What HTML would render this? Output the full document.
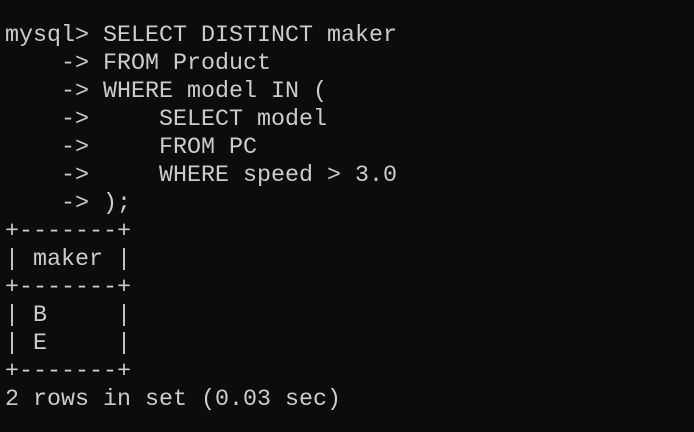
<!DOCTYPE html>
<html><head><style>
html,body{margin:0;padding:0;background:#0c0c0c;width:694px;height:432px;overflow:hidden}
pre{margin:0;position:absolute;left:5px;top:22px;font-family:"Liberation Mono",monospace;font-size:23.33px;line-height:28px;color:#cccccc}
</style></head><body>
<pre>mysql&gt; SELECT DISTINCT maker
    -&gt; FROM Product
    -&gt; WHERE model IN (
    -&gt;     SELECT model
    -&gt;     FROM PC
    -&gt;     WHERE speed &gt; 3.0
    -&gt; );
+-------+
| maker |
+-------+
| B     |
| E     |
+-------+
2 rows in set (0.03 sec)</pre>
</body></html>
